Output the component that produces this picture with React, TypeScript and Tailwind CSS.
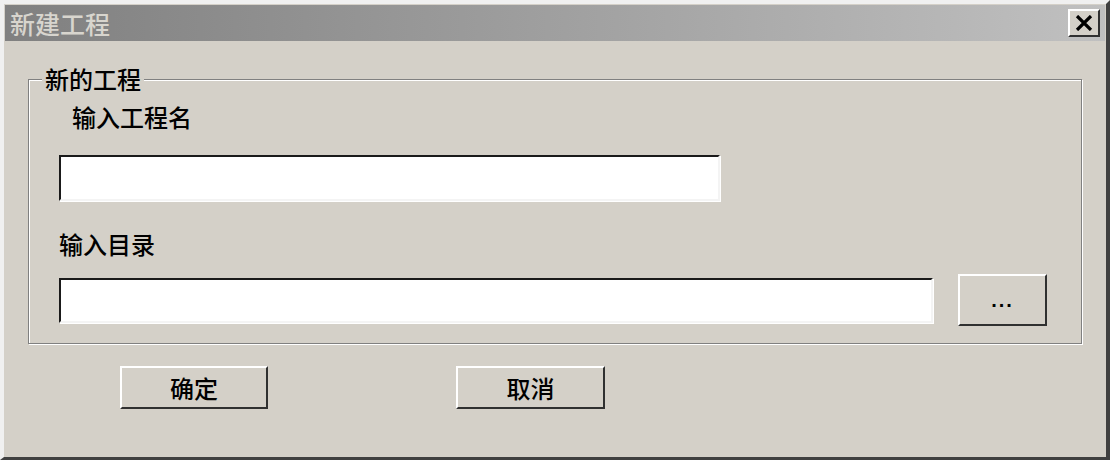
import React from "react";

const font = "font-['Noto_Sans_CJK_SC',sans-serif]";

const Field = ({ width, height }: { width: string; height: string }) => (
  <div
    className={`${width} ${height} bg-white border-t-2 border-l-2 border-b-2 border-r-2 border-t-[#1a1a1a] border-l-[#1a1a1a] border-b-[#f4f4f4] border-r-[#f4f4f4] shadow-[1px_1px_0_#ffffff]`}
  />
);

const Button = ({ label, className }: { label: string; className: string }) => (
  <button
    className={`${className} flex items-center justify-center bg-[#d4d0c8] border-t-2 border-l-2 border-b-2 border-r-2 border-t-white border-l-white border-b-[#303030] border-r-[#303030] text-[24px] leading-[24px] font-medium text-black`}
  >
    {label}
  </button>
);

const App = () => {
  return (
    <div
      className={`${font} w-[1110px] h-[460px] box-border p-[1px] bg-[#d4d0c8] border-t-4 border-l-4 border-r-4 border-b-[3px] border-t-[#f0f0f0] border-l-[#f0f0f0] border-r-[#404040] border-b-[#404040] overflow-hidden`}
    >
      {/* title bar */}
      <div className="h-[36px] flex items-center justify-between bg-gradient-to-r from-[#808080] to-[#c0c0c0]">
        <span className="pl-[5px] text-[25px] leading-[25px] font-medium text-[#d8d5ce]">新建工程</span>
        <button className="mr-[5px] w-[32px] h-[28px] flex items-center justify-center bg-[#d4d0c8] border-t-2 border-l-2 border-b-2 border-r-2 border-t-white border-l-white border-b-[#303030] border-r-[#303030]">
          <svg width="18" height="16" viewBox="0 0 18 16">
            <path d="M2 1 L16 15 M16 1 L2 15" stroke="#000" strokeWidth="3.2" />
          </svg>
        </button>
      </div>

      {/* group box */}
      <div className="relative mt-[38px] ml-[23px] w-[1054px] h-[265px] border border-[#808080] shadow-[1px_1px_0_#ffffff,inset_1px_1px_0_#ffffff]">
        <span className="absolute left-[13px] top-[-13px] px-[3px] bg-[#d4d0c8] text-[24px] leading-[24px] font-medium text-black">
          新的工程
        </span>
        <div className="mt-[25px] ml-[43px] text-[24px] leading-[24px] font-medium text-black">输入工程名</div>
        <div className="mt-[26px] ml-[30px]">
          <Field width="w-[661px]" height="h-[46px]" />
        </div>
        <div className="mt-[31px] ml-[30px] text-[24px] leading-[24px] font-medium text-black">输入目录</div>
        <div className="mt-[18px] ml-[30px] flex items-center gap-[25px]">
          <Field width="w-[874px]" height="h-[45px]" />
          <button className="w-[89px] h-[52px] flex items-center justify-center bg-[#d4d0c8] border-t-2 border-l-2 border-b-2 border-r-2 border-t-white border-l-white border-b-[#303030] border-r-[#303030]">
            <span className="font-['Liberation_Sans',sans-serif] text-[20px] leading-[20px] font-bold tracking-[2px] text-black">
              ...
            </span>
          </button>
        </div>
      </div>

      {/* actions */}
      <div className="mt-[22px] ml-[115px] flex gap-[188px]">
        <Button label="确定" className="w-[148px] h-[43px]" />
        <Button label="取消" className="w-[149px] h-[43px]" />
      </div>
    </div>
  );
};

export default App;
